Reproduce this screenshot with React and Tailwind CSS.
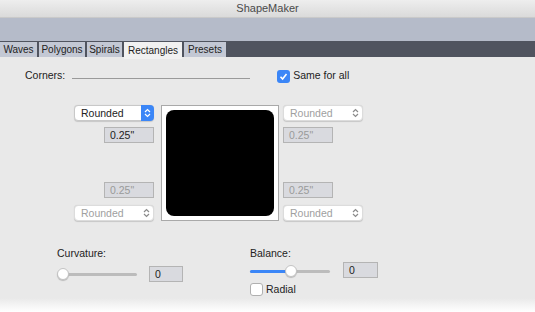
import React from "react";

const font = { fontFamily: '"Liberation Sans", Arial, sans-serif' };

function Stepper({ active }) {
  return (
    <svg width="7" height="10" viewBox="0 0 7 10" fill="none" stroke={active ? "#fff" : "#8a8a8a"} strokeWidth="1.2">
      <path d="M1 4 L3.5 1.5 L6 4" />
      <path d="M1 6 L3.5 8.5 L6 6" />
    </svg>
  );
}

function Select({ active }) {
  return (
    <div
      className={`flex h-[16px] w-[80px] items-center justify-between rounded-[4px] border bg-white shadow-[0_0.5px_1px_rgba(0,0,0,0.15)] ${
        active ? "border-[#c8c8c8]" : "border-[#dcdcdc] bg-[#f3f3f3]"
      }`}
    >
      <span className={`pl-[6px] text-[10.5px] leading-none ${active ? "text-[#222]" : "text-[#a0a0a0]"}`}>Rounded</span>
      {active ? (
        <span className="flex h-[16px] w-[13px] items-center justify-center rounded-r-[4px] bg-[#3b86f7] -mr-px">
          <Stepper active />
        </span>
      ) : (
        <span className="flex w-[13px] items-center justify-center">
          <Stepper />
        </span>
      )}
    </div>
  );
}

function Field({ value, active, width = "w-[50px]" }) {
  return (
    <div
      className={`flex h-[16px] ${width} items-center border border-[#b4b4b4] bg-[#d9dadf] pl-[5px] text-[10.5px] leading-none ${
        active ? "text-[#222]" : "text-[#9a9a9a]"
      }`}
    >
      {value}
    </div>
  );
}

function Slider({ fill }) {
  return (
    <div className="relative h-[12px] w-[80px]">
      <div className="absolute left-0 right-0 top-[5px] h-[3px] rounded-full bg-[#bcbcbc]" />
      {fill > 0 && <div className="absolute left-0 top-[5px] h-[3px] rounded-full bg-[#3b86f7]" style={{ width: fill }} />}
      <div
        className="absolute top-0 h-[12px] w-[12px] rounded-full border border-[#c4c4c4] bg-white shadow-[0_1px_1px_rgba(0,0,0,0.2)]"
        style={{ left: fill > 0 ? fill - 6 : 0 }}
      />
    </div>
  );
}

const tabs = [
  ["Waves", "w-[37px]"],
  ["Polygons", "w-[46px]"],
  ["Spirals", "w-[35px]"],
  ["Rectangles", "w-[58px]"],
  ["Presets", "w-[42px]"],
];

export default function App() {
  return (
    <div className="flex h-[312px] w-[535px] flex-col overflow-hidden bg-[#e9e9e9]" style={font}>
      {/* title bar */}
      <div className="flex h-[18px] items-center justify-center border-b border-[#c9c9c9] bg-gradient-to-b from-[#eeeeee] to-[#dadada] text-[11px] text-[#4a4a4a]">
        ShapeMaker
      </div>
      <div className="h-[23px] bg-[#b5bbc9]" />
      {/* tabs */}
      <div className="flex h-[16px] items-end gap-[2px] bg-[#50545f]">
        {tabs.map(([t, w]) => (
          <div
            key={t}
            className={`flex items-center justify-center text-[10px] leading-none text-[#222] ${w} ${
              t === "Rectangles" ? "h-[17px] -mb-[2px] bg-[#f1f1f1]" : "h-[15px] bg-[#c3c8d4]"
            }`}
          >
            {t}
          </div>
        ))}
      </div>

      <div className="flex flex-1 flex-col">
        {/* corners row */}
        <div className="mt-[12px] flex h-[14px] items-center">
          <span className="ml-[25px] text-[10.5px] text-[#222]">Corners:</span>
          <div className="ml-[7px] mt-[5px] h-px w-[178px] bg-[#9a9a9a]" />
          <div className="ml-[27px] flex h-[13px] w-[13px] items-center justify-center rounded-[3px] bg-[#3b86f7]">
            <svg width="9" height="9" viewBox="0 0 9 9" fill="none" stroke="#fff" strokeWidth="1.6">
              <path d="M1.5 4.8 L3.6 7 L7.5 2" />
            </svg>
          </div>
          <span className="ml-[3px] text-[10.5px] text-[#222]">Same for all</span>
        </div>

        {/* shape grid */}
        <div className="ml-[74px] mt-[22px] flex h-[116px] items-stretch">
          <div className="flex w-[80px] flex-col justify-between">
            <div className="flex flex-col items-end gap-[6px]">
              <Select active />
              <Field value={'0.25"'} active />
            </div>
            <div className="flex flex-col items-end gap-[7px]">
              <Field value={'0.25"'} />
              <Select />
            </div>
          </div>
          <div className="ml-[7px] flex w-[118px] border border-[#a9a9a9] bg-white p-[4px]">
            <div className="flex-1 rounded-[8px] bg-black" />
          </div>
          <div className="ml-[4px] flex w-[80px] flex-col justify-between">
            <div className="flex flex-col items-start gap-[6px]">
              <Select />
              <Field value={'0.25"'} />
            </div>
            <div className="flex flex-col items-start gap-[7px]">
              <Field value={'0.25"'} />
              <Select />
            </div>
          </div>
        </div>

        {/* sliders */}
        <div className="mt-[25px] flex">
          <div className="ml-[57px] flex w-[193px] flex-col">
            <span className="text-[10.5px] text-[#222]">Curvature:</span>
            <div className="mt-[4px] flex items-center">
              <Slider fill={0} />
              <div className="ml-[12px]">
                <Field value="0" active width="w-[34px]" />
              </div>
            </div>
          </div>
          <div className="flex flex-col">
            <span className="text-[10.5px] text-[#222]">Balance:</span>
            <div className="mt-[3px] flex items-center">
              <Slider fill={41} />
              <div className="ml-[13px] -mt-[3px]">
                <Field value="0" active width="w-[35px]" />
              </div>
            </div>
            <div className="mt-[4px] flex items-center">
              <div className="h-[13px] w-[13px] rounded-[3px] border border-[#b0b0b0] bg-white" />
              <span className="ml-[3px] text-[10.5px] text-[#222]">Radial</span>
            </div>
          </div>
        </div>
        <div className="mt-auto h-[14px] bg-gradient-to-b from-[#e9e9e9] to-white" />
      </div>
    </div>
  );
}
